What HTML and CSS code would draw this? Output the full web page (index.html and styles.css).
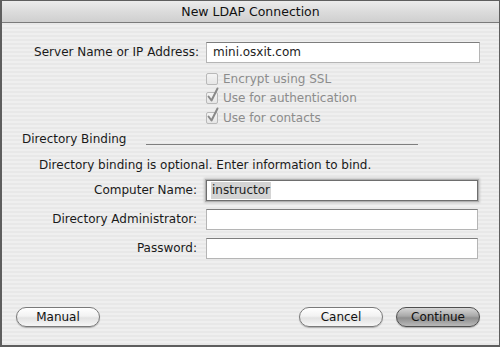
FILE: index.html
```html
<!DOCTYPE html>
<html>
<head>
<meta charset="utf-8">
<link rel="stylesheet" href="styles.css">
</head>
<body>
<div class="window">
  <div class="titlebar">New LDAP Connection</div>
  <div class="content">
    <div class="field server">
      <label class="lbl">Server Name or IP Address:</label>
      <div class="input">mini.osxit.com</div>
    </div>
    <div class="checks">
      <div class="check"><span class="box"></span><span>Encrypt using SSL</span></div>
      <div class="check"><span class="box"><svg viewBox="0 0 14 16" width="14" height="16"><path d="M2.5 9.5 L5.5 13.5 L11.5 1.5" fill="none" stroke="#8a8a8a" stroke-width="2" stroke-linecap="round" stroke-linejoin="round"/></svg></span><span>Use for authentication</span></div>
      <div class="check"><span class="box"><svg viewBox="0 0 14 16" width="14" height="16"><path d="M2.5 9.5 L5.5 13.5 L11.5 1.5" fill="none" stroke="#8a8a8a" stroke-width="2" stroke-linecap="round" stroke-linejoin="round"/></svg></span><span>Use for contacts</span></div>
    </div>
    <div class="section">
      <span>Directory Binding</span>
      <span class="rule"></span>
    </div>
    <p class="note">Directory binding is optional. Enter information to bind.</p>
    <div class="bind">
      <div class="field">
        <label class="lbl">Computer Name:</label>
        <div class="input focus"><span class="sel">instructor</span></div>
      </div>
      <div class="field">
        <label class="lbl">Directory Administrator:</label>
        <div class="input"></div>
      </div>
      <div class="field">
        <label class="lbl">Password:</label>
        <div class="input"></div>
      </div>
    </div>
    <div class="buttons">
      <button class="btn">Manual</button>
      <span class="spacer"></span>
      <button class="btn">Cancel</button>
      <button class="btn default">Continue</button>
    </div>
  </div>
</div>
</body>
</html>
```
FILE: styles.css
```css
* { box-sizing: border-box; }
html, body { margin: 0; padding: 0; }
body {
  width: 500px;
  height: 347px;
  font-family: "DejaVu Sans", "Liberation Sans", sans-serif;
  font-size: 12px;
  color: #1a1a1a;
  background: #9a9a9a;
}
.window {
  width: 500px;
  height: 347px;
  border: 1px solid #5e5e5e;
  border-left-width: 2px;
  border-bottom-width: 2px;
  display: flex;
  flex-direction: column;
  background: repeating-linear-gradient(to bottom, #efefef 0, #efefef 2px, #e8e8e8 2px, #e8e8e8 4px);
}
.titlebar {
  height: 22px;
  flex: none;
  text-align: center;
  line-height: 21px;
  font-size: 12.5px;
  color: #111;
  background: linear-gradient(to bottom, #ececec 0%, #dcdcdc 50%, #cfcfcf 100%);
  border-bottom: 1px solid #7a7a7a;
}
.content {
  flex: 1;
  display: flex;
  flex-direction: column;
  padding: 18px 19px 18px 13px;
}
.field {
  display: grid;
  grid-template-columns: 184px 1fr;
  column-gap: 7px;
  align-items: center;
  height: 22px;
}
.lbl {
  text-align: right;
  white-space: nowrap;
}
.input {
  height: 21px;
  background: #fff;
  border: 1px solid #b5b5b5;
  border-top-color: #7d7d7d;
  padding: 0 6px;
  line-height: 19px;
  color: #222;
}
.input.focus {
  border: 1px solid #6e6e6e;
  box-shadow: 0 0 0 1px #b0b0b0, 0 0 2px 2px #c8c8c8;
}
.sel {
  background: #d4d4d4;
  display: inline-block;
  line-height: 17px;
  padding: 0 1px;
  margin-left: -2px;
}
.checks {
  display: flex;
  flex-direction: column;
  padding-left: 191px;
  margin-top: 6px;
  color: #8c8c8c;
}
.check {
  display: flex;
  align-items: center;
  height: 20px;
  gap: 5px;
}
.check:first-child { height: 19px; }
.box {
  position: relative;
  width: 12px;
  height: 12px;
  border: 1px solid #b9b9b9;
  border-radius: 2px;
  background: linear-gradient(to bottom, #f4f4f4, #e6e6e6);
  flex: none;
}
.box svg {
  position: absolute;
  left: -1px;
  top: -6px;
}
.section {
  display: flex;
  align-items: center;
  margin-top: 2px;
  padding-left: 7px;
  height: 18px;
}
.rule {
  width: 272px;
  height: 1px;
  background: #7f7f7f;
  margin-left: 20px;
  margin-top: 11px;
}
.note {
  margin: 10px 0 0 24px;
  height: 14px;
}
.bind {
  display: flex;
  flex-direction: column;
  gap: 7px;
  margin-top: 7px;
}
.bind .field {
  grid-template-columns: 182px 272px;
  column-gap: 9px;
}
.buttons {
  margin-top: auto;
  display: flex;
  align-items: center;
  gap: 13px;
  padding-left: 2px;
  margin-left: -1px;
}
.spacer { flex: 1; }
.btn {
  font-family: inherit;
  font-size: 12px;
  height: 20px;
  width: 84px;
  border-radius: 10px;
  border: 1px solid #7a7a7a;
  background: linear-gradient(to bottom, #ffffff 0%, #f2f2f2 45%, #e2e2e2 55%, #f6f6f6 100%);
  color: #111;
  padding: 0;
  box-shadow: 0 1px 1px rgba(0,0,0,0.25);
}
.btn.default {
  border-color: #4f4f4f;
  background: linear-gradient(to bottom, #d6d6d6 0%, #a9a9a9 45%, #8e8e8e 55%, #b9b9b9 100%);
}
```
